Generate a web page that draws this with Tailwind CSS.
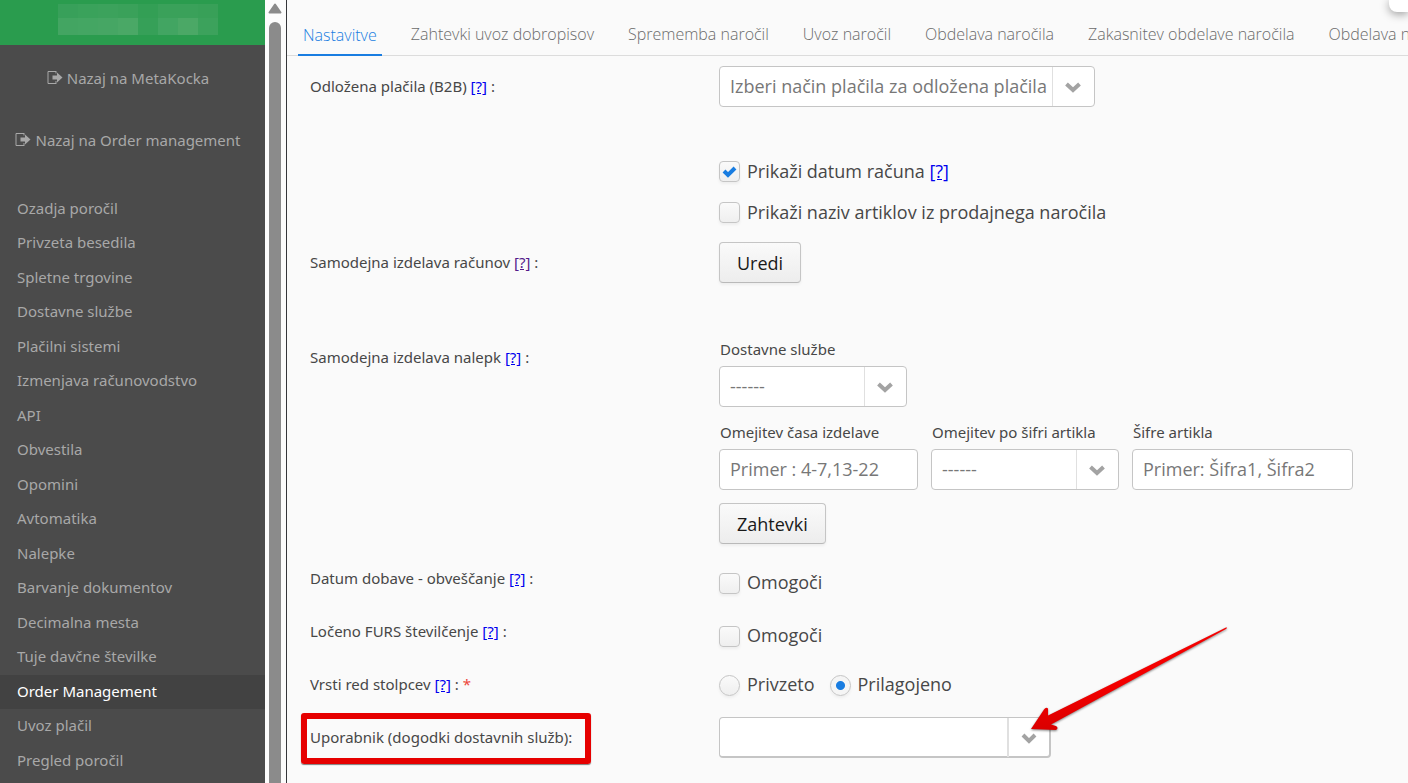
<!DOCTYPE html>
<html lang="sl">
<head>
  <meta charset="UTF-8">
  <meta name="viewport" content="width=device-width, initial-scale=1.0">
  <title>Order Management - Nastavitve</title>
  <script src="https://cdn.jsdelivr.net/npm/@tailwindcss/browser@4"></script>
</head>
<body class="flex h-screen overflow-hidden bg-[#fafafa] font-['Noto_Sans','Open_Sans',sans-serif] text-[15px] text-[#474747]">

  <!-- Sidebar -->
  <aside class="w-[265px] shrink-0 overflow-hidden bg-[#4b4b4b] text-[#a8a8a8]">
    <div class="flex h-[45px] justify-center bg-[#2a9c4e] pt-1 pl-[11px]">
      <div class="grid h-[31px] grid-cols-[repeat(8,20px)] grid-rows-[14px_17px]">
        <span class="bg-[#38a05a]"></span><span class="bg-[#3aa25b]"></span><span class="bg-[#3ca25c]"></span><span class="bg-[#3aa15a]"></span>
        <span class="bg-[#339f55]"></span><span class="bg-[#3aa15a]"></span><span class="bg-[#3aa15a]"></span><span class="bg-[#38a058]"></span>
        <span class="bg-[#43a562]"></span><span class="bg-[#44a663]"></span><span class="bg-[#46a664]"></span><span class="bg-[#4aa866]"></span>
        <span class="bg-[#36a058]"></span><span class="bg-[#42a562]"></span><span class="bg-[#4ba866]"></span><span class="bg-[#3ca25c]"></span>
      </div>
    </div>

    <div class="flex h-[147px] flex-col items-center pt-[17px] pr-[9px]">
      <a href="#" class="mb-[30px] flex h-8 items-center gap-1">
        <svg class="h-4 w-4" viewBox="0 0 16 16" fill="none"><path d="M9 1.5H1v12h8M9 1v2.500M9 11v3" stroke="currentColor"/><path d="M5.500 5.500H10V2.500l5.500 5-5.500 5v-3H5.500z" fill="currentColor"/></svg>
        Nazaj na MetaKocka
      </a>
      <a href="#" class="flex h-8 items-center gap-1">
        <svg class="h-4 w-4" viewBox="0 0 16 16" fill="none"><path d="M9 1.5H1v12h8M9 1v2.500M9 11v3" stroke="currentColor"/><path d="M5.500 5.500H10V2.500l5.500 5-5.500 5v-3H5.500z" fill="currentColor"/></svg>
        Nazaj na Order management
      </a>
    </div>

    <nav>
      <ul class="leading-8 *:pl-[17px] *:odd:h-[34px] *:even:h-[35px]">
        <li><a href="#">Ozadja poročil</a></li>
        <li><a href="#">Privzeta besedila</a></li>
        <li><a href="#">Spletne trgovine</a></li>
        <li><a href="#">Dostavne službe</a></li>
        <li><a href="#">Plačilni sistemi</a></li>
        <li><a href="#">Izmenjava računovodstvo</a></li>
        <li><a href="#">API</a></li>
        <li><a href="#">Obvestila</a></li>
        <li><a href="#">Opomini</a></li>
        <li><a href="#">Avtomatika</a></li>
        <li><a href="#">Nalepke</a></li>
        <li><a href="#">Barvanje dokumentov</a></li>
        <li><a href="#">Decimalna mesta</a></li>
        <li><a href="#">Tuje davčne številke</a></li>
        <li class="bg-[#424242] text-white"><a href="#">Order Management</a></li>
        <li><a href="#">Uvoz plačil</a></li>
        <li><a href="#">Pregled poročil</a></li>
      </ul>
    </nav>
  </aside>

  <!-- Scrollbar -->
  <div class="flex w-[22px] shrink-0 flex-col border-r border-[#35363a] bg-[#fcfcfc] pt-[3px] pl-[3px]">
    <svg class="mb-2 h-[11px] w-[14px]" viewBox="0 0 14 11"><path d="M7 1.500 12.500 9.500H1.500z" fill="#8b8b8b" stroke="#8b8b8b" stroke-width="2" stroke-linejoin="round"/></svg>
    <div class="ml-px w-3 grow rounded-t-full bg-[#8b8b8b]"></div>
  </div>

  <!-- Content -->
  <main class="relative min-w-0 grow overflow-hidden">
    <nav class="flex h-14 items-end gap-6 border-b border-[#dcdcdc] pl-[11px] font-['Open_Sans',sans-serif] text-base font-light whitespace-nowrap text-[#6b6b6b] *:h-[43px] *:px-[5px] *:leading-[44px]">
      <a href="#" class="-mb-px border-b-2 border-[#197de1] text-[#197de1]">Nastavitve</a>
      <a href="#">Zahtevki uvoz dobropisov</a>
      <a href="#">Sprememba naročil</a>
      <a href="#">Uvoz naročil</a>
      <a href="#">Obdelava naročila</a>
      <a href="#">Zakasnitev obdelave naročila</a>
      <a href="#">Obdelava naročil</a>
    </nav>
    <div class="absolute top-0 right-0 h-3 w-[19px] rounded-bl-lg bg-white shadow-[0_2px_10px_rgba(0,0,0,0.4)]"></div>

    <form class="pt-[10px] pl-[23px]">
      <div class="flex h-[95px]">
        <div class="w-[409px] shrink-0 leading-[41px]"><label for="odlozena">Odložena plačila (B2B)</label> <a href="#" class="text-[#0000ee] underline">[?]</a> :</div>
        <div class="relative h-[41px] w-[376px]">
          <select id="odlozena" class="h-full w-full appearance-none rounded-[4px] border border-[#c5c5c5] bg-white pb-[2px] pl-[10px] font-['Open_Sans',sans-serif] text-lg text-[#777]"><option>Izberi način plačila za odložena plačila</option></select>
          <span class="pointer-events-none absolute inset-y-px right-px flex w-[42px] items-center justify-center border-l border-[#e0e0e0] pr-[2px]"><svg class="h-3 w-4" viewBox="0 0 16 12"><path d="m1.500 3 6.500 6 6.500-6" fill="none" stroke="#a3a3a3" stroke-width="4"/></svg></span>
        </div>
      </div>

      <div class="flex h-[81px] flex-col gap-5 pl-[409px] font-['Open_Sans',sans-serif] text-lg leading-[21px]">
        <div class="flex gap-[7px]">
          <input type="checkbox" id="datum" checked class="h-[21px] w-[21px] appearance-none rounded-[4px] border border-[#c5c5c5] bg-linear-to-b from-[#fafafa] to-[#efefef] shadow-[0_2px_3px_rgba(0,0,0,0.05)]">
          <svg class="pointer-events-none -ml-[28px] h-[21px] w-[21px]" viewBox="0 0 21 21"><path d="m5 10 4 4 7-7" fill="none" stroke="#197de1" stroke-width="4"/></svg>
          <span><label for="datum">Prikaži datum računa</label> <a href="#" class="text-[#0000ee] underline">[?]</a></span>
        </div>
        <div class="flex gap-[7px]">
          <input type="checkbox" id="naziv" class="h-[21px] w-[21px] appearance-none rounded-[4px] border border-[#c5c5c5] bg-linear-to-b from-[#fafafa] to-[#efefef] shadow-[0_2px_3px_rgba(0,0,0,0.05)]">
          <label for="naziv">Prikaži naziv artiklov iz prodajnega naročila</label>
        </div>
      </div>

      <div class="flex h-[95px]">
        <div class="w-[409px] shrink-0 leading-[41px]">Samodejna izdelava računov <a href="#" class="text-[#551a8b] underline">[?]</a> :</div>
        <button type="button" class="h-[41px] rounded-[4px] border border-[#c5c5c5] border-b-[#b9b9b9] bg-linear-to-b from-[#fafafa] to-[#ededed] px-[17px] font-['Open_Sans',sans-serif] text-lg text-[#191919] shadow-[0_2px_3px_rgba(0,0,0,0.05)]">Uredi</button>
      </div>

      <div class="flex h-[236px]">
        <div class="w-[409px] shrink-0 leading-[41px]">Samodejna izdelava nalepk <a href="#" class="text-[#0000ee] underline">[?]</a> :</div>
        <div class="leading-6">
          <label for="sluzbe" class="block h-[29px] pl-px">Dostavne službe</label>
          <div class="relative h-[41px] w-[188px]">
            <select id="sluzbe" class="h-full w-full appearance-none rounded-[4px] border border-[#c5c5c5] bg-white pb-[2px] pl-[10px] font-['Open_Sans',sans-serif] text-lg text-[#777]"><option>------</option></select>
            <span class="pointer-events-none absolute inset-y-px right-px flex w-[42px] items-center justify-center border-l border-[#e0e0e0] pr-[2px]"><svg class="h-3 w-4" viewBox="0 0 16 12"><path d="m1.500 3 6.500 6 6.500-6" fill="none" stroke="#a3a3a3" stroke-width="4"/></svg></span>
          </div>
          <div class="mt-[13px] flex gap-[13px]">
            <div>
              <label for="cas" class="block h-[29px] pl-px">Omejitev časa izdelave</label>
              <input type="text" id="cas" placeholder="Primer : 4-7,13-22" class="h-[41px] w-[199px] rounded-[4px] border border-[#c5c5c5] bg-white px-[10px] pb-[2px] font-['Open_Sans',sans-serif] text-lg placeholder:text-[#777]">
            </div>
            <div>
              <label for="sifra" class="block h-[29px] pl-px">Omejitev po šifri artikla</label>
              <div class="relative h-[41px] w-[188px]">
                <select id="sifra" class="h-full w-full appearance-none rounded-[4px] border border-[#c5c5c5] bg-white pb-[2px] pl-[10px] font-['Open_Sans',sans-serif] text-lg text-[#777]"><option>------</option></select>
                <span class="pointer-events-none absolute inset-y-px right-px flex w-[42px] items-center justify-center border-l border-[#e0e0e0] pr-[2px]"><svg class="h-3 w-4" viewBox="0 0 16 12"><path d="m1.500 3 6.500 6 6.500-6" fill="none" stroke="#a3a3a3" stroke-width="4"/></svg></span>
              </div>
            </div>
            <div>
              <label for="sifre" class="block h-[29px] pl-px">Šifre artikla</label>
              <input type="text" id="sifre" placeholder="Primer: Šifra1, Šifra2" class="h-[41px] w-[221px] rounded-[4px] border border-[#c5c5c5] bg-white px-[10px] pb-[2px] font-['Open_Sans',sans-serif] text-lg placeholder:text-[#777]">
            </div>
          </div>
          <button type="button" class="mt-[13px] h-[41px] rounded-[4px] border border-[#c5c5c5] border-b-[#b9b9b9] bg-linear-to-b from-[#fafafa] to-[#ededed] px-[17px] font-['Open_Sans',sans-serif] text-lg text-[#191919] shadow-[0_2px_3px_rgba(0,0,0,0.05)]">Zahtevki</button>
        </div>
      </div>

      <div class="flex h-[53px]">
        <div class="w-[409px] shrink-0 leading-[10px]">Datum dobave - obveščanje <a href="#" class="text-[#0000ee] underline">[?]</a> :</div>
        <div class="flex h-[21px] gap-[7px] font-['Open_Sans',sans-serif] text-lg leading-[19px]">
          <input type="checkbox" id="dobava" class="h-[21px] w-[21px] appearance-none rounded-[4px] border border-[#c5c5c5] bg-linear-to-b from-[#fafafa] to-[#efefef] shadow-[0_2px_3px_rgba(0,0,0,0.05)]">
          <label for="dobava">Omogoči</label>
        </div>
      </div>

      <div class="flex h-[49px]">
        <div class="w-[409px] shrink-0 leading-[10px]">Ločeno FURS številčenje <a href="#" class="text-[#0000ee] underline">[?]</a> :</div>
        <div class="flex h-[21px] gap-[7px] font-['Open_Sans',sans-serif] text-lg leading-[19px]">
          <input type="checkbox" id="furs" class="h-[21px] w-[21px] appearance-none rounded-[4px] border border-[#c5c5c5] bg-linear-to-b from-[#fafafa] to-[#efefef] shadow-[0_2px_3px_rgba(0,0,0,0.05)]">
          <label for="furs">Omogoči</label>
        </div>
      </div>

      <div class="flex h-[42px]">
        <div class="w-[409px] shrink-0 leading-[19px]">Vrsti red stolpcev <a href="#" class="text-[#0000ee] underline">[?]</a> : <span class="text-[#ed473b]">*</span></div>
        <div class="flex h-[21px] gap-[7px] font-['Open_Sans',sans-serif] text-lg leading-[19px]">
          <input type="radio" name="stolpci" id="privzeto" class="h-[21px] w-[21px] appearance-none rounded-full border border-[#c5c5c5] bg-linear-to-b from-[#fafafa] to-[#efefef] shadow-[0_2px_3px_rgba(0,0,0,0.05)]">
          <label for="privzeto">Privzeto</label>
          <input type="radio" name="stolpci" id="prilagojeno" checked class="ml-2 h-[21px] w-[21px] appearance-none rounded-full border border-[#c5c5c5] bg-[radial-gradient(circle,#197de1_4px,#f5f5f5_5px)] shadow-[0_2px_3px_rgba(0,0,0,0.05)]">
          <label for="prilagojeno">Prilagojeno</label>
        </div>
      </div>

      <div class="flex h-[41px]">
        <div class="relative w-[409px] shrink-0 leading-10">
          <label for="uporabnik">Uporabnik (dogodki dostavnih služb):</label>
          <span class="pointer-events-none absolute -top-1 -left-[9px] h-[51px] w-[290px] rounded-[3px] border-6 border-[#e60000] shadow-[0_1px_1px_rgba(0,0,0,0.5)]"></span>
        </div>
        <div class="relative w-[332px]">
          <select id="uporabnik" class="h-full w-full appearance-none rounded-[4px] border border-r-2 border-b-2 border-[#c5c5c5] bg-white pl-[10px] text-lg"><option></option></select>
          <span class="pointer-events-none absolute inset-y-px right-px flex w-[43px] items-center justify-center border-l-2 border-[#e0e0e0] pr-[2px]"><svg class="h-3 w-4" viewBox="0 0 16 12"><path d="m2 3 6 6 6-6" fill="none" stroke="#a3a3a3" stroke-width="4"/></svg></span>
          <!-- Pointer to the drop-down -->
          <svg class="pointer-events-none absolute -top-[97px] left-[301px] h-[120px] w-[220px] drop-shadow-[0_1px_1px_rgba(0,0,0,0.5)]" viewBox="0 0 220 120">
            <defs><linearGradient id="red" x1="0" y1="0" x2="0.200" y2="1"><stop offset="0.600" stop-color="#f40000"/><stop offset="1" stop-color="#d80000"/></linearGradient></defs>
            <path d="M11 109 24 89.500Q26 86.500 28 88.500L28 95.500 206 7.500Q208 7 206 9L31 104.500 36 106Q39 108 36 110z" fill="url(#red)"/>
          </svg>
        </div>
      </div>
    </form>
  </main>
</body>
</html>
